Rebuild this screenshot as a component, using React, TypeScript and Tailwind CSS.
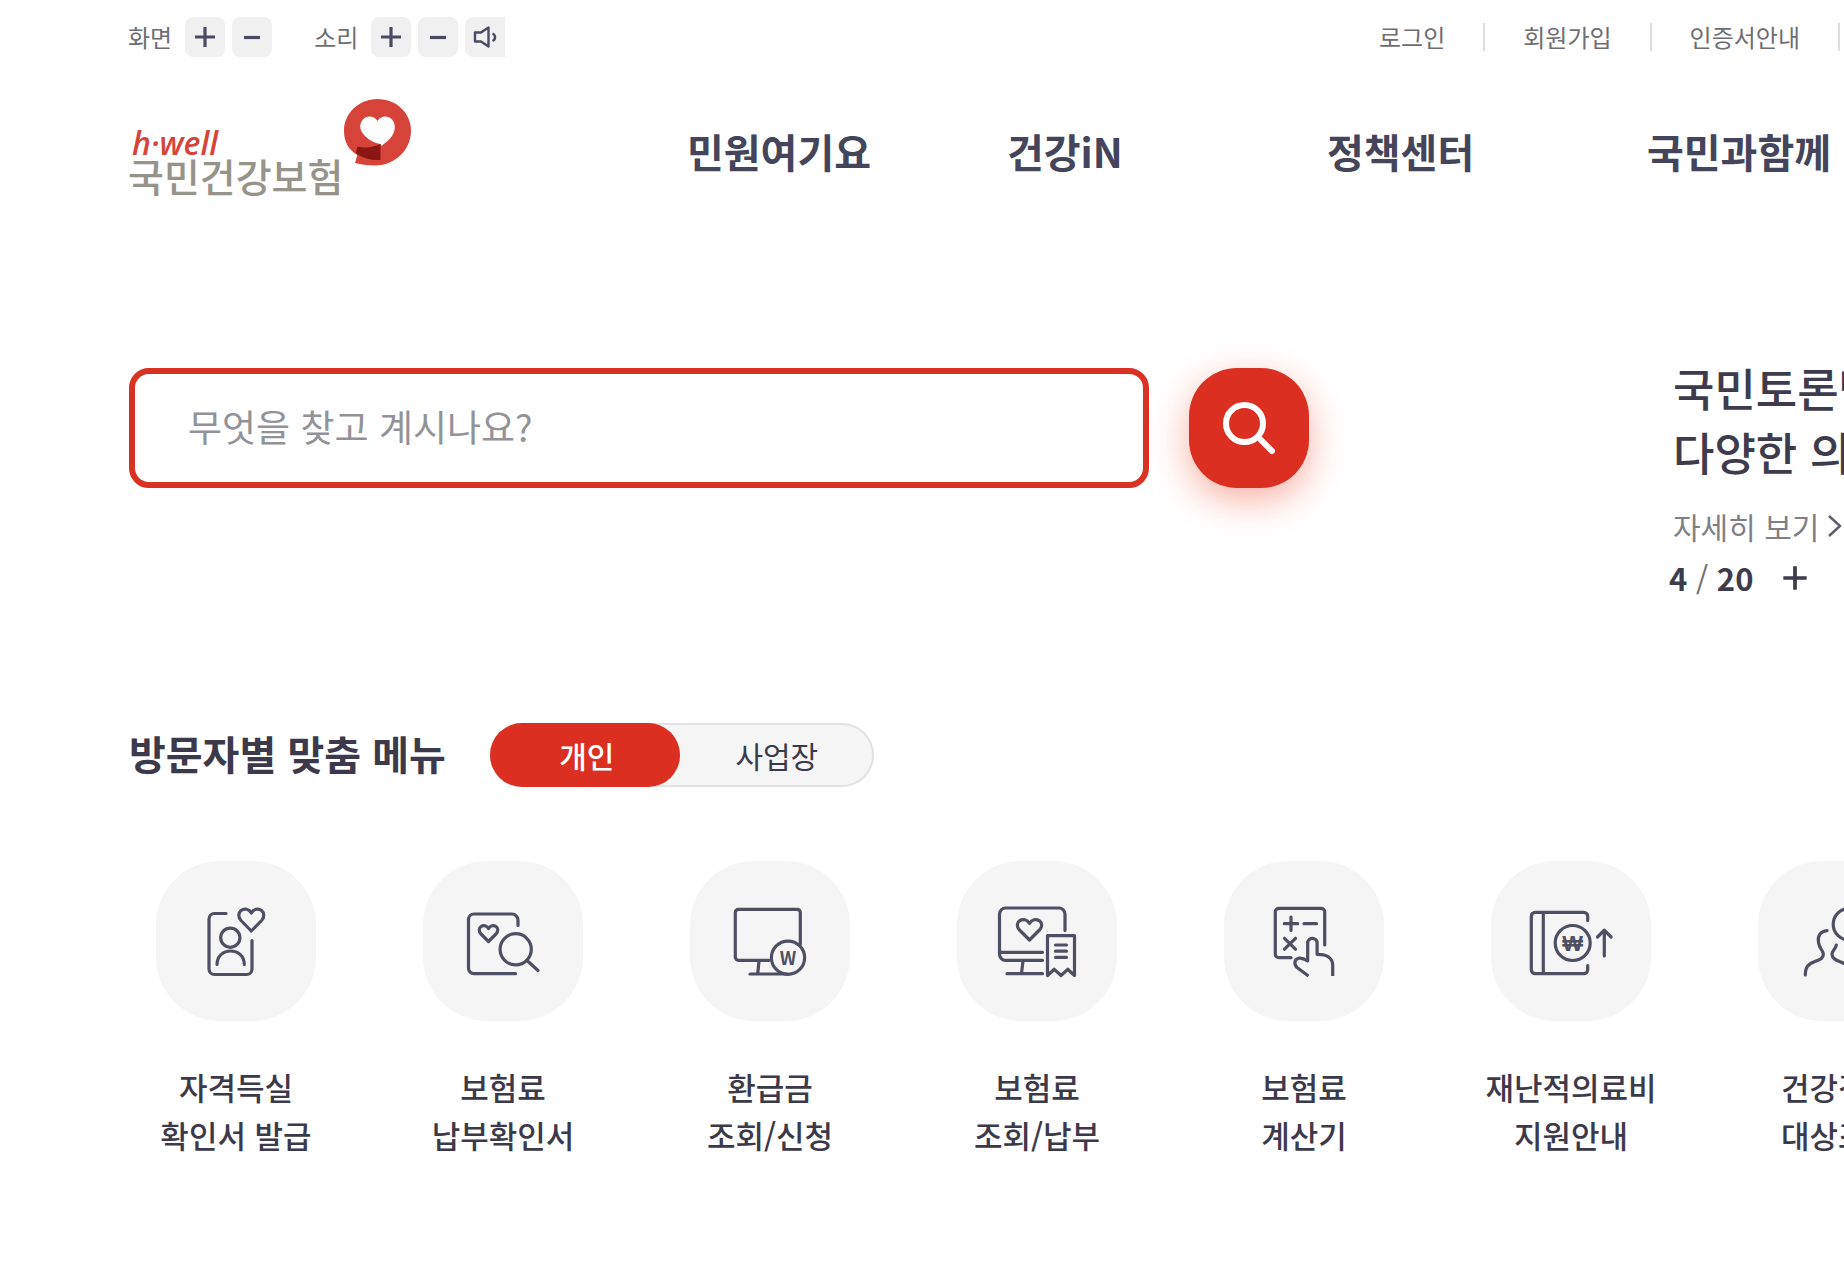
import type { ReactNode } from "react";

const UTIL_LINKS = ["로그인", "회원가입", "인증서안내"];
const NAV_LINKS = ["민원여기요", "건강iN", "정책센터", "국민과함께"];

function PlusIcon({ size = 24 }: { size?: number }) {
  return (
    <svg width={size} height={size} viewBox="0 0 24 24" stroke="currentColor" strokeWidth={3.2} fill="none" aria-hidden="true">
      <path d="M12 2v20M2 12h20" />
    </svg>
  );
}

function MinusIcon() {
  return (
    <svg width={24} height={24} viewBox="0 0 24 24" stroke="currentColor" strokeWidth={3.2} fill="none" aria-hidden="true">
      <path d="M4 12.5h16" />
    </svg>
  );
}

function SpeakerIcon() {
  return (
    <svg width={24} height={24} viewBox="0 0 24 24" stroke="currentColor" strokeWidth={2.4} strokeLinejoin="round" fill="none" aria-hidden="true">
      <path d="M2 7.500h6l7.500-5v19L8 16.500H2z" />
      <path d="M19.500 8.500c3.400 1.500 3.400 6 0 7.500" />
    </svg>
  );
}

function UtilButton({
  label,
  last,
  children,
}: {
  label: string;
  last?: boolean;
  children: ReactNode;
}) {
  return (
    <button
      type="button"
      aria-label={label}
      className={`flex size-10 items-center justify-center bg-[#f0f0f1] text-[#4a4a64] ${
        last ? "rounded-l-lg" : "rounded-lg"
      }`}
    >
      {children}
    </button>
  );
}

function LogoMark() {
  return (
    <svg width={69} height={68} viewBox="0 0 69 68" aria-hidden="true">
      <path
        d="M34.5 0C53.500 0 68 14 68 31.500C68 51 52 66.500 32 66.500C24.500 66.500 18 65.500 12 64L14.300 56C5 50.500 1 42 1 32C1 14 16 0 34.500 0z"
        fill="#d64439"
      />
      <path
        d="M34.500 22C37.500 16.500 45 16 49 20.500C53 25 52.500 32 49 37C46.500 41 42.500 43.500 38.500 47L37.500 45C33 44.500 27 42 22.500 37.500C17 32.500 15.500 26 19.500 21C23.500 16 31 16.500 34.500 22z"
        fill="#fff"
      />
      <path d="M14.300 47.500C22 49.500 30 48.500 37.500 45V61C29 61.500 20 59.500 13 54.500z" fill="#8a1512" />
    </svg>
  );
}

function MenuIcon({ children }: { children: ReactNode }) {
  return (
    <svg
      className="size-40"
      viewBox="0 0 160 160"
      fill="none"
      stroke="#4f4f63"
      strokeWidth={3.2}
      strokeLinecap="round"
      strokeLinejoin="round"
      aria-hidden="true"
    >
      {children}
    </svg>
  );
}

const MENU_ITEMS: { lines: [string, string]; icon: ReactNode }[] = [
  {
    lines: ["자격득실", "확인서 발급"],
    icon: (
      <MenuIcon>
        <path d="M70 52.500H58.500a5.500 5.500 0 0 0-5.500 5.500V108a5.500 5.500 0 0 0 5.500 5.500H90.500a5.500 5.500 0 0 0 5.500-5.500V79.500" />
        <circle cx="74.300" cy="76.700" r="9.600" />
        <path d="M61 103.500c0-18 27.300-18 27.300 0" />
        <path d="M95.300 70L85 59.500C82 56.300 82.200 51.800 85 49.500C88.500 47 93 47.800 95.300 52C97.600 47.800 102.100 47 105.600 49.500C108.400 51.800 108.600 56.300 105.600 59.500z" />
      </MenuIcon>
    ),
  },
  {
    lines: ["보험료", "납부확인서"],
    icon: (
      <MenuIcon>
        <path d="M95 64.500V59a6 6 0 0 0-6-6H51a5.500 5.500 0 0 0-5.500 5.500V107.200a5.500 5.500 0 0 0 5.500 5.500H92.500" />
        <circle cx="92.700" cy="88.300" r="15.600" />
        <path d="M104 99.500L115 109.500" />
        <path d="M65.500 80.500L58 73C55.500 70.300 55.800 67 58 65.500C60.500 64 63.800 64.500 65.500 67.500C67.200 64.500 70.500 64 73 65.500C75.200 67 75.500 70.300 73 73z" />
      </MenuIcon>
    ),
  },
  {
    lines: ["환급금", "조회/신청"],
    icon: (
      <MenuIcon>
        <path d="M79 99.300H48.500a3.200 3.200 0 0 1-3.200-3.200V51.500a3.200 3.200 0 0 1 3.200-3.200H107.100a3.200 3.200 0 0 1 3.200 3.200V83" />
        <path d="M69 100L67.700 113M60 113H97" />
        <circle cx="98" cy="96.700" r="16.600" />
        <text x="98" y="104" textAnchor="middle" fontSize="18" fontWeight="700" fill="#4f4f63" stroke="none">
          W
        </text>
      </MenuIcon>
    ),
  },
  {
    lines: ["보험료", "조회/납부"],
    icon: (
      <MenuIcon>
        <path d="M108 69.500V53a6 6 0 0 0-6-6H48.500a6 6 0 0 0-6 6V93.300a6 6 0 0 0 6 6H85.500M43 91.300H85.500" />
        <path d="M66 100L64.500 112.500M50 112.700H85.500" />
        <path d="M72.500 79L62.500 69C59.500 66 59.800 61.800 62.500 59.800C66 57.500 70 58.500 72.500 62.500C75 58.500 79 57.500 82.500 59.800C85.200 61.800 85.500 66 82.500 69z" />
        <path d="M90.500 114.500V74.700H117.500V114.500L110.700 108.300L104 114.500L97.300 108.300z" />
        <path d="M98.500 84H109.500M98.500 90.200H109.500M98.500 96.300H109.500" />
      </MenuIcon>
    ),
  },
  {
    lines: ["보험료", "계산기"],
    icon: (
      <MenuIcon>
        <path d="M100.700 84V50.800a3.500 3.500 0 0 0-3.500-3.500H54.800a3.500 3.500 0 0 0-3.500 3.500V93.200a3.500 3.500 0 0 0 3.500 3.500H67" />
        <path d="M67 56V69.500M60.300 62.700H73.700M80 62.700H92.500M60.500 77.300L71.500 88.200M71.500 77.300L60.500 88.200" />
        <path
          d="M84.500 115L73 106.500C69.500 103 70.500 98.500 74.500 97.300C78 96.500 80.500 98 83.700 100V82a4.700 4.700 0 0 1 9.400 0V93.300C103 93 108.700 97 108.700 104.500V115"
          strokeLinecap="butt"
        />
      </MenuIcon>
    ),
  },
  {
    lines: ["재난적의료비", "지원안내"],
    icon: (
      <MenuIcon>
        <path d="M96.700 59.500V55.300a4 4 0 0 0-4-4H44.300a4 4 0 0 0-4 4V108.700a4 4 0 0 0 4 4H92.700a4 4 0 0 0 4-4V104.500M52.300 51.300V112.700" />
        <circle cx="81.700" cy="82" r="17.500" />
        <path d="M113.300 95V69.500M106.500 76L113.300 69.200L120.100 76" />
        <text
          x="81.700"
          y="90"
          textAnchor="middle"
          className="font-['Liberation_Sans',sans-serif] text-[22px] font-bold"
          fill="#4f4f63"
          stroke="none"
        >
          ₩
        </text>
      </MenuIcon>
    ),
  },
  {
    lines: ["건강검진", "대상조회"],
    icon: (
      <MenuIcon>
        <path d="M69 69.700C62 70.500 59.500 75 60.500 81.500C61.500 88 65 89 65.300 93C65.500 97.500 62 98.500 57 100.500C50 103 47.300 106 47.300 114" />
        <circle cx="91" cy="63.300" r="15.800" />
        <path d="M78.300 84C77.500 88.500 74 89.500 74 93.500C74.200 98.500 80 99.500 88 103.500C98 99.500 106 98.500 106.500 93.500C106.500 89.500 103 88.500 102.200 84" />
      </MenuIcon>
    ),
  },
];

function TopBar() {
  return (
    <div className="flex h-10 items-center text-[24px] leading-10 text-[#6e6e72]">
      <div className="flex items-center gap-[7px]">
        <span className="mr-1.5">화면</span>
        <UtilButton label="화면 확대">
          <PlusIcon />
        </UtilButton>
        <UtilButton label="화면 축소">
          <MinusIcon />
        </UtilButton>
      </div>
      <div className="ml-[42px] flex items-center gap-[7px]">
        <span className="mr-1.5">소리</span>
        <UtilButton label="소리 크게">
          <PlusIcon />
        </UtilButton>
        <UtilButton label="소리 작게">
          <MinusIcon />
        </UtilButton>
        <UtilButton label="음성 듣기" last>
          <SpeakerIcon />
        </UtilButton>
      </div>
      <ul className="mr-1 ml-auto flex items-center gap-[38px]">
        {UTIL_LINKS.map((link) => (
          <li key={link} className="flex items-center gap-[38px]">
            <a href="#">{link}</a>
            <span className="h-7 w-0.5 bg-[#dcdcdc]" />
          </li>
        ))}
      </ul>
    </div>
  );
}

function Header() {
  return (
    <header className="flex items-start pt-[42px]">
      <a href="#" className="flex w-[559px] shrink-0 items-start">
        <span className="flex w-[215px] flex-col pt-[30px]">
          <span className="pl-1 font-['Open_Sans','Noto_Sans',sans-serif] text-[32px] leading-7 font-semibold text-[#d64439] italic">
            h·well
          </span>
          <span className="text-[39px] leading-9 font-medium whitespace-nowrap text-[#96948a]">국민건강보험</span>
        </span>
        <LogoMark />
      </a>
      <nav className="pt-[26px]">
        <ul className="flex">
          {NAV_LINKS.map((link) => (
            <li key={link} className="w-80 shrink-0">
              <a href="#" className="text-[40px] leading-[52px] font-bold text-[#44455a]">
                {link}
              </a>
            </li>
          ))}
        </ul>
      </nav>
    </header>
  );
}

function SearchForm() {
  return (
    <form className="flex gap-10" onSubmit={(e) => e.preventDefault()}>
      <input
        type="text"
        aria-label="검색어"
        placeholder="무엇을 찾고 계시나요?"
        className="h-[120px] w-[1020px] rounded-[20px] border-6 border-[#d93122] bg-white px-[53px] pb-1 text-[37px] text-[#44455a] outline-none placeholder:text-[#929297]"
      />
      <button
        type="submit"
        aria-label="검색"
        className="flex size-[120px] items-center justify-center rounded-[48px] bg-[#db3021] shadow-[0_12px_36px_rgba(240,80,50,0.45)]"
      >
        <svg width={52} height={52} viewBox="0 0 52 52" fill="none" stroke="#fff" strokeWidth={6} aria-hidden="true">
          <circle cx="21.500" cy="21.500" r="18.500" />
          <path d="M34.500 34.500L51 51" />
        </svg>
      </button>
    </form>
  );
}

function Banner() {
  return (
    <section className="-mt-3 shrink-0 whitespace-nowrap text-[#3e3c4c]">
      <p className="text-[45px] leading-16 font-medium">
        국민토론방
        <br />
        다양한 의견
      </p>
      <a href="#" className="mt-4 flex items-center gap-2 text-[30px] leading-[52px] text-[#808084]">
        자세히 보기
        <svg width={16} height={24} viewBox="0 0 16 24" fill="none" stroke="#5c5c6c" strokeWidth={2.4} aria-hidden="true">
          <path d="M2 2l11 10L2 22" />
        </svg>
      </a>
      <div className="flex items-center gap-7 pt-0.5 text-[31px] leading-12 font-bold">
        <p className="-ml-1">
          4 <span className="font-normal text-[#6e6e72]">/</span> 20
        </p>
        <button type="button" aria-label="더보기">
          <PlusIcon size={28} />
        </button>
      </div>
    </section>
  );
}

function VisitorMenu() {
  return (
    <section className="mt-[121px]">
      <div className="flex items-center gap-11">
        <h2 className="pb-1 text-[40px] leading-15 font-bold text-[#3c3a4a]">방문자별 맞춤 메뉴</h2>
        <div className="flex h-16 w-96 rounded-full bg-[#f5f5f6] text-[30px] leading-[60px] inset-ring-2 inset-ring-[#e2e2e5]">
          <button type="button" className="w-[190px] rounded-full bg-[#db3021] pl-1 font-medium text-white">
            개인
          </button>
          <button type="button" className="flex-1 text-[#3c3a4a]">
            사업장
          </button>
        </div>
      </div>
      <ul className="mt-[74px] flex gap-[53px]">
        {MENU_ITEMS.map((item) => (
          <li key={item.lines.join(" ")} className="w-[214px] shrink-0">
            <a href="#" className="flex flex-col items-center gap-[42px]">
              <span className="rounded-[64px] bg-[#f5f5f6]">{item.icon}</span>
              <span className="text-center text-[31px] leading-12 font-medium whitespace-nowrap text-[#3c3a4a]">
                {item.lines[0]}
                <br />
                {item.lines[1]}
              </span>
            </a>
          </li>
        ))}
      </ul>
    </section>
  );
}

export default function App() {
  return (
    <div
      lang="ko"
      className="min-h-screen overflow-hidden bg-white pt-[17px] font-['Noto_Sans_CJK_KR',sans-serif]"
    >
      <div className="pl-32">
        <TopBar />
        <Header />
        <main className="pt-[175px] pl-px">
          <div className="flex items-start gap-[364px]">
            <SearchForm />
            <Banner />
          </div>
          <VisitorMenu />
        </main>
      </div>
    </div>
  );
}
